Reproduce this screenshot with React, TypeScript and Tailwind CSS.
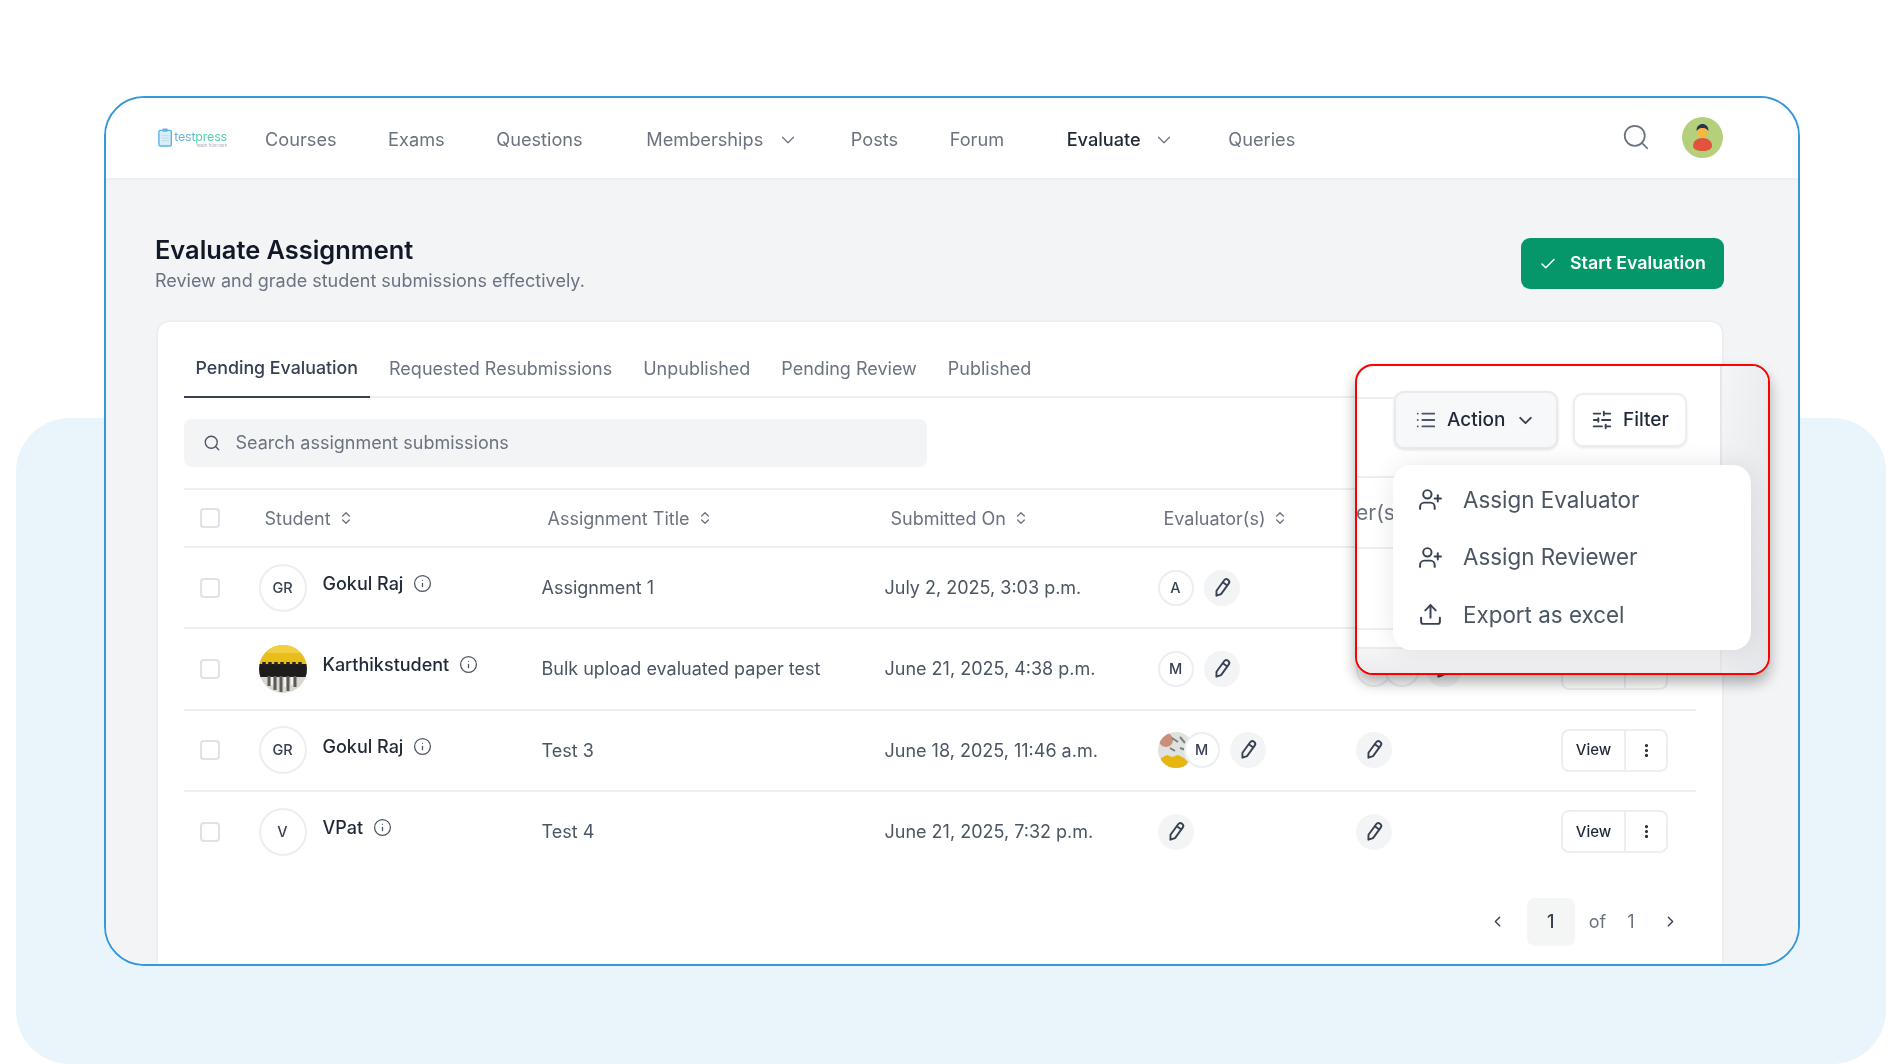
import {
  Check,
  ChevronDown,
  ChevronLeft,
  ChevronRight,
  ChevronsUpDown,
  EllipsisVertical,
  Info,
  List,
  Search,
  SlidersHorizontal,
  Upload,
  UserPlus,
} from "lucide-react";

function Logo() {
  return (
    <div className="flex items-start gap-[2px] w-[69px] h-[22px]">
      <svg width="17" height="21" viewBox="0 0 16 21" fill="none">
        <rect x="1" y="2.5" width="14" height="17.5" rx="1.5" fill="#d8eefa" stroke="#5fb4e6" strokeWidth="1.6" />
        <rect x="5" y="0.5" width="6" height="3.5" rx="1" fill="#5fb4e6" />
        <path d="M4 8h8M4 11h8M4 14h8" stroke="#bcd9ea" strokeWidth="1" />
      </svg>
      <div className="flex flex-col items-end">
        <span className="text-[12.5px] leading-[15px] mt-[2px] tracking-[-0.2px]">
          <span className="text-[#6cb6d8]">test</span>
          <span className="text-[#58d0ae]">press</span>
        </span>
        <span className="text-[4px] leading-[4px] text-[#9ca3af]">Teach from here</span>
      </div>
    </div>
  );
}

function UserAvatar() {
  return (
    <svg width="41" height="41" viewBox="0 0 41 41">
      <circle cx="20.5" cy="20.5" r="20.5" fill="#b5d07a" />
      <circle cx="20.5" cy="15" r="5.5" fill="#f5b942" />
      <path d="M14.5 14c0-5 3-7 6-7s6 2 6 7c-2-2.5-4-3-6-3s-4 .5-6 3z" fill="#26344f" />
      <path d="M11 29c0-5 4-8 9.5-8s9.5 3 9.5 8c0 3-4 5-9.5 5S11 32 11 29z" fill="#e2533f" />
    </svg>
  );
}

function PencilIcon() {
  return (
    <svg width="24" height="24" viewBox="0 0 24 24" fill="none" stroke="#374151" strokeWidth="1.9" strokeLinejoin="round">
      <g transform="rotate(36 12 12)">
        <path d="M9.2 4.500a2.800 2.800 0 0 1 5.600 0V17.500L12 21.500l-2.800-4z" />
        <path d="M9.200 6.800h5.600" />
      </g>
    </svg>
  );
}

function PencilButton() {
  return (
    <button className="flex items-center justify-center w-[36px] h-[36px] rounded-full bg-[#f3f4f6]">
      <PencilIcon />
    </button>
  );
}

function Initial({ label, size = "w-[36px] h-[36px]", extra = "" }: { label: string; size?: string; extra?: string }) {
  return (
    <div className={`flex items-center justify-center rounded-full bg-white border-2 border-[#eceef1] text-[14.5px] font-medium text-[#374151] ${size} ${extra}`}>
      {label}
    </div>
  );
}

function GroupPhoto() {
  return (
    <svg width="48" height="48" viewBox="0 0 48 48" className="rounded-full overflow-hidden">
      <rect width="48" height="48" fill="#d8d7d0" />
      <rect width="48" height="20" fill="#e8bd1c" />
      <path d="M14 0h22l6 8H8z" fill="#f0d040" />
      <rect x="0" y="19" width="48" height="13" fill="#1f1d1b" />
      <path d="M5 20v-3M11 20v-3M17 20v-3M23 20v-3M29 20v-3M35 20v-3M41 20v-3" stroke="#2a2622" strokeWidth="3.5" />
      <path d="M10 31v10M16 31v14M22 31v16M29 31v15M36 31v11" stroke="#5c5b58" strokeWidth="3" />
      <path d="M13 32v8M26 32v10M33 32v8" stroke="#f3f2ee" strokeWidth="2" />
    </svg>
  );
}

function NewsPhoto() {
  return (
    <svg width="36" height="36" viewBox="0 0 36 36" className="rounded-full overflow-hidden">
      <rect width="36" height="36" fill="#dfe2df" />
      <circle cx="8" cy="8" r="7" fill="#c98f7c" />
      <path d="M14 6l6 4M22 5l5 6M12 16l5 3M22 16l6 2" stroke="#7a7f80" strokeWidth="2" />
      <path d="M3 26l6-3 5 2 6-2 6 3 4 4-4 6H8l-5-5z" fill="#e6b60f" />
    </svg>
  );
}

function SortHeader({ label }: { label: string }) {
  return (
    <div className="flex items-center gap-[7px] pl-[6px] text-[18px] text-[#6b7280]">
      {label}
      <ChevronsUpDown size={16} strokeWidth={2} className="text-[#6b7280]" />
    </div>
  );
}

function ActionButtons() {
  return (
    <div className="flex items-stretch h-[43px] w-[107px] border-2 border-[#eceef1] rounded-[8px] bg-white">
      <span className="flex items-center justify-center w-[63px] border-r-2 border-[#eceef1] text-[15px] font-medium text-[#1f2937]">View</span>
      <span className="flex flex-1 items-center justify-center text-[#1f2937]">
        <EllipsisVertical size={17} strokeWidth={2.5} />
      </span>
    </div>
  );
}

type Row = {
  initials?: string;
  name: string;
  title: string;
  date: string;
  evaluators: React.ReactNode;
  reviewers: React.ReactNode;
};

const rows: Row[] = [
  {
    initials: "GR",
    name: "Gokul Raj",
    title: "Assignment 1",
    date: "July 2, 2025, 3:03 p.m.",
    evaluators: (
      <div className="flex items-center gap-[10px]">
        <Initial label="A" />
        <PencilButton />
      </div>
    ),
    reviewers: <PencilButton />,
  },
  {
    name: "Karthikstudent",
    title: "Bulk upload evaluated paper test",
    date: "June 21, 2025, 4:38 p.m.",
    evaluators: (
      <div className="flex items-center gap-[10px]">
        <Initial label="M" />
        <PencilButton />
      </div>
    ),
    reviewers: (
      <div className="flex items-center gap-[6px]">
        <div className="flex">
          <Initial label="A" />
          <Initial label="M" extra="-ml-[8px]" />
        </div>
        <PencilButton />
      </div>
    ),
  },
  {
    initials: "GR",
    name: "Gokul Raj",
    title: "Test 3",
    date: "June 18, 2025, 11:46 a.m.",
    evaluators: (
      <div className="flex items-center gap-[10px]">
        <div className="flex">
          <NewsPhoto />
          <Initial label="M" extra="-ml-[10px]" />
        </div>
        <PencilButton />
      </div>
    ),
    reviewers: <PencilButton />,
  },
  {
    initials: "V",
    name: "VPat",
    title: "Test 4",
    date: "June 21, 2025, 7:32 p.m.",
    evaluators: <PencilButton />,
    reviewers: <PencilButton />,
  },
];

const columns = "grid grid-cols-[75px_283px_343px_273px_198px_1fr] items-center";
const tabs = ["Requested Resubmissions", "Unpublished", "Pending Review", "Published"];

const menuItems = [
  { label: "Assign Evaluator", icon: <UserPlus size={25} strokeWidth={1.9} /> },
  { label: "Assign Reviewer", icon: <UserPlus size={25} strokeWidth={1.9} /> },
  { label: "Export as excel", icon: <Upload size={25} strokeWidth={1.9} /> },
];

function Checkbox() {
  return <div className="w-[20px] h-[20px] ml-[16px] rounded-[4px] border-2 border-[#dfe2e6] bg-white" />;
}

function Highlight() {
  return (
    <div className="absolute left-[1355px] top-[364px] w-[415px] h-[311px] rounded-[18px] border-2 border-[#f00] bg-white overflow-hidden shadow-[0_8px_14px_rgba(0,0,0,0.3)]">
      <div className="relative h-full blur-[0.4px]">
        {/* page edge behind the pop-out */}
        <div className="absolute right-0 top-0 bottom-0 w-[48px] bg-gradient-to-br from-[#f4f5f7] to-[#e4e5e8] border-l-2 border-[#e4e6ea]" />
        <div className="absolute left-0 right-[48px] bottom-0 h-[26px] bg-gradient-to-b from-[#f5f5f6] to-[#ececee] border-t-2 border-[#e9ebee]" />
        <div className="absolute left-0 w-[40px] top-[31px] border-t-2 border-[#eceef1]" />
        <div className="absolute left-0 w-[40px] top-[110px] border-t-2 border-[#eceef1]" />
        <div className="absolute left-0 w-[40px] top-[181px] border-t-2 border-[#eceef1]" />
        <div className="absolute left-0 w-[40px] top-[262px] border-t-2 border-[#eceef1]" />
        <span className="absolute left-[-1px] top-[133px] text-[21px] leading-[28px] text-[#6b7280] w-[38px] overflow-hidden whitespace-nowrap">er(s)</span>

        <div className="flex items-center gap-[15px] pl-[37px] pt-[25px]">
          <button className="flex items-center h-[58px] w-[164px] pl-[19px] gap-[10px] rounded-[10px] border-2 border-[#e8eaee] bg-[#f7f8fa] shadow-[0_1px_3px_rgba(0,0,0,0.12)] text-[19px] font-medium text-[#1f2937]">
            <List size={22} strokeWidth={2} className="text-[#4b5563]" />
            Action
            <ChevronDown size={21} strokeWidth={2.2} className="text-[#374151]" />
          </button>
          <button className="flex items-center h-[54px] w-[114px] pl-[16px] gap-[10px] rounded-[10px] border-2 border-[#eceef1] bg-white shadow-[0_1px_3px_rgba(0,0,0,0.1)] text-[19px] font-medium text-[#1f2937]">
            <SlidersHorizontal size={22} strokeWidth={2} className="text-[#374151]" />
            Filter
          </button>
        </div>

        <div className="absolute left-[36px] top-[99px] w-[358px] h-[185px] rounded-[18px] bg-white shadow-[0_0_26px_rgba(0,0,0,0.09)] flex flex-col pt-[6px] text-[22.4px] text-[#4b5563]">
          {menuItems.map((item) => (
            <div key={item.label} className="flex items-center h-[57.5px] pl-[25px] gap-[20px]">
              <span className="text-[#374151]">{item.icon}</span>
              {item.label}
            </div>
          ))}
        </div>
      </div>
    </div>
  );
}

export default function App() {
  return (
    <div className="relative w-[1904px] h-[1064px] overflow-hidden bg-white grid font-['Inter',sans-serif]">
      {/* pale blue panel behind the window */}
      <div className="col-start-1 row-start-1 mt-[418px] ml-[16px] mr-[18px] rounded-[54px] bg-[#e9f4fb]" />

      <div className="col-start-1 row-start-1 mt-[96px] ml-[104px] w-[1696px] h-[870px] rounded-[40px] border-2 border-[#3498db] bg-white overflow-hidden flex flex-col">
        {/* Nav */}
        <header className="flex items-center h-[82px] pl-[52px] pr-[75px] border-b-2 border-[#eceef1] bg-white text-[18.2px] text-[#6b7280] blur-[0.5px] shrink-0">
          <Logo />
          <nav className="flex items-center gap-[51.5px] ml-[38px] mt-[4px]">
            <span>Courses</span>
            <span>Exams</span>
            <span>Questions</span>
            <span className="flex items-center gap-[14px] ml-[12px]">
              Memberships
              <ChevronDown size={22} strokeWidth={1.3} />
            </span>
            <span>Posts</span>
            <span>Forum</span>
            <span className="flex items-center gap-[12px] ml-[11px] mr-[2px] font-medium text-[#1f2937]">
              Evaluate
              <ChevronDown size={22} strokeWidth={1.3} className="text-[#6b7280]" />
            </span>
            <span>Queries</span>
          </nav>
          <div className="flex items-center gap-[31px] ml-auto -mt-[2px]">
            <Search size={30} strokeWidth={1.4} className="text-[#6b7280]" />
            <UserAvatar />
          </div>
        </header>

        {/* Page */}
        <main className="flex-1 bg-[#f3f4f6] pl-[50px] pr-[74px] blur-[0.5px]">
          <div className="flex justify-between items-start pt-[54px]">
            <div className="-ml-[1px]">
              <h1 className="text-[25.4px] leading-[32px] font-semibold text-[#111827]">Evaluate Assignment</h1>
              <p className="mt-[3px] text-[18px] leading-[24px] text-[#6b7280]">Review and grade student submissions effectively.</p>
            </div>
            <button className="flex items-center h-[51px] w-[203px] mt-[4px] pl-[18px] gap-[13px] rounded-[9px] bg-[#059669] text-[17.8px] font-semibold text-white">
              <Check size={18} strokeWidth={2} />
              Start Evaluation
            </button>
          </div>

          <section className="mt-[27px] h-[700px] rounded-t-[14px] border-2 border-[#eceef1] bg-white pl-[25.5px] pr-[26px] pt-[16px]">
            <div className="flex gap-[7px] border-b-2 border-[#eceef1] h-[60px] text-[18px] text-[#6b7280]">
              <span className="flex items-center h-[60px] pt-[2px] px-[12px] border-b-2 border-[#374151] text-[17.8px] font-medium text-[#374151]">Pending Evaluation</span>
              {tabs.map((tab) => (
                <span key={tab} className="flex items-center h-[58px] pt-[2px] px-[12px]">
                  {tab}
                </span>
              ))}
            </div>

            <div className="flex items-center h-[48px] w-[743px] mt-[21px] pl-[19px] pb-[1px] gap-[15px] rounded-[8px] bg-[#f3f4f6] text-[18px] text-[#6b7280]">
              <Search size={18} strokeWidth={1.8} className="text-[#4b5563]" />
              Search assignment submissions
            </div>

            <div className={`${columns} mt-[21px] h-[60px] border-y-2 border-[#eceef1]`}>
              <Checkbox />
              <SortHeader label="Student" />
              <SortHeader label="Assignment Title" />
              <SortHeader label="Submitted On" />
              <SortHeader label="Evaluator(s)" />
              <div />
            </div>

            {rows.map((row, i) => (
              <div key={row.title} className={`${columns} ${i > 0 ? "h-[81.5px] border-t-2 border-[#eceef1]" : "h-[79px]"}`}>
                <Checkbox />
                <div className="flex items-center gap-[16px]">
                  {row.initials ? <Initial label={row.initials} size="w-[48px] h-[48px]" /> : <GroupPhoto />}
                  <div className="flex items-center gap-[10px] -mt-[8px] text-[18px] font-medium text-[#1f2937]">
                    {row.name}
                    <Info size={19} strokeWidth={1.6} className="text-[#4b5563]" />
                  </div>
                </div>
                <div className="text-[18px] text-[#4b5563]">{row.title}</div>
                <div className="text-[18px] text-[#4b5563]">{row.date}</div>
                <div>{row.evaluators}</div>
                <div className="flex items-center justify-between pr-[28px]">
                  {row.reviewers}
                  <ActionButtons />
                </div>
              </div>
            ))}

            <div className="flex items-center justify-end pr-[17.5px] mt-[26px] text-[18px] text-[#6b7280]">
              <ChevronLeft size={17} strokeWidth={2} className="text-[#374151]" />
              <span className="flex items-center justify-center w-[48px] h-[48px] ml-[21px] rounded-[8px] bg-[#f4f5f5] font-medium text-[#374151]">1</span>
              <span className="ml-[14px]">of</span>
              <span className="ml-[21px]">1</span>
              <ChevronRight size={17} strokeWidth={2} className="ml-[27px] text-[#374151]" />
            </div>
          </section>
        </main>
      </div>

      <Highlight />
    </div>
  );
}
